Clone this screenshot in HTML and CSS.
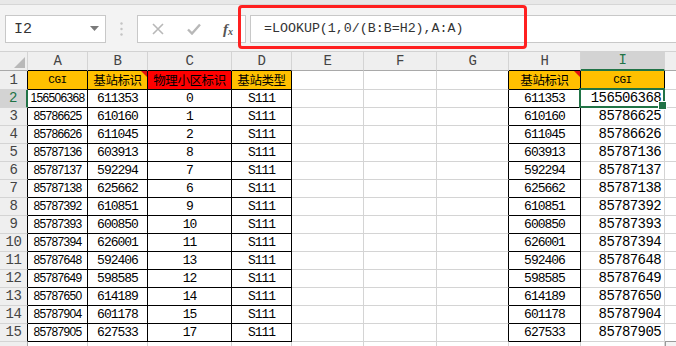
FILE: index.html
```html
<!DOCTYPE html>
<html lang="zh-CN">

<head>
    <meta charset="UTF-8">
    <meta name="viewport" content="width=device-width, initial-scale=1.0">
    <title>LOOKUP 反向查找</title>
    <link rel="stylesheet" href="styles.css">
</head>

<body>
    <div class="top-strip"></div>

    <div class="formula-bar">
        <div class="name-box">
            <span>I2</span>
            <svg class="drop" width="9" height="5" viewBox="0 0 9 5"><path d="M0 0H9L4.5 5Z" fill="#7a7a7a"/></svg>
        </div>
        <div class="grip">
            <svg width="3" height="14" viewBox="0 0 3 14"><circle cx="1.5" cy="1.5" r="1.2" fill="#c4c4c4"/><circle cx="1.5" cy="7" r="1.2" fill="#c4c4c4"/><circle cx="1.5" cy="12.5" r="1.2" fill="#c4c4c4"/></svg>
        </div>
        <div class="fx-box">
            <svg class="btn" width="12" height="12" viewBox="0 0 12 12"><path d="M1 1L11 11M11 1L1 11" stroke="#b8b8b8" stroke-width="1.6" fill="none"/></svg>
            <svg class="btn" width="14" height="12" viewBox="0 0 14 12"><path d="M1 6.5L5 10.5L13 1.5" stroke="#b8b8b8" stroke-width="2.4" fill="none"/></svg>
            <span class="fx">f<sub>x</sub></span>
        </div>
        <div class="formula">=LOOKUP(1,0/(B:B=H2),A:A)</div>
    </div>
    <div class="highlight"></div>

    <table class="sheet">
        <colgroup>
            <col style="width:28px">
            <col style="width:60px">
            <col style="width:60px">
            <col style="width:84px">
            <col style="width:60px">
            <col style="width:72px">
            <col style="width:73px">
            <col style="width:72px">
            <col style="width:72px">
            <col style="width:84px">
            <col style="width:40px">
        </colgroup>
        <thead>
            <tr>
                <th class="ch corner"><svg width="11" height="11" viewBox="0 0 11 11"><path d="M11 0V11H0Z" fill="#b9b9b9"/></svg></th>
                <th class="ch bk">A</th>
                <th class="ch bk">B</th>
                <th class="ch bk">C</th>
                <th class="ch bk">D</th>
                <th class="ch">E</th>
                <th class="ch">F</th>
                <th class="ch">G</th>
                <th class="ch bk">H</th>
                <th class="ch act">I</th>
                <th class="ch"></th>
            </tr>
        </thead>
        <tbody>
            <tr class="d first">
                <th class="rh">1</th>
                <td class="yel cgi">CGI</td>
                <td class="yel cn note">基站标识</td>
                <td class="red cn">物理小区标识</td>
                <td class="yel cn">基站类型</td>
                <td></td><td></td><td></td>
                <td class="yel cn note">基站标识</td>
                <td class="yel cgi">CGI</td>
                <td></td>
            </tr>
            <tr class="d">
                <th class="rh act">2</th>
                <td class="a">156506368</td><td>611353</td><td>0</td><td>S111</td>
                <td></td><td></td><td></td>
                <td>611353</td><td class="v sel">156506368</td><td></td>
            </tr>
            <tr class="d">
                <th class="rh">3</th>
                <td class="a">85786625</td><td>610160</td><td>1</td><td>S111</td>
                <td></td><td></td><td></td>
                <td>610160</td><td class="v">85786625</td><td></td>
            </tr>
            <tr class="d">
                <th class="rh">4</th>
                <td class="a">85786626</td><td>611045</td><td>2</td><td>S111</td>
                <td></td><td></td><td></td>
                <td>611045</td><td class="v">85786626</td><td></td>
            </tr>
            <tr class="d">
                <th class="rh">5</th>
                <td class="a">85787136</td><td>603913</td><td>8</td><td>S111</td>
                <td></td><td></td><td></td>
                <td>603913</td><td class="v">85787136</td><td></td>
            </tr>
            <tr class="d">
                <th class="rh">6</th>
                <td class="a">85787137</td><td>592294</td><td>7</td><td>S111</td>
                <td></td><td></td><td></td>
                <td>592294</td><td class="v">85787137</td><td></td>
            </tr>
            <tr class="d">
                <th class="rh">7</th>
                <td class="a">85787138</td><td>625662</td><td>6</td><td>S111</td>
                <td></td><td></td><td></td>
                <td>625662</td><td class="v">85787138</td><td></td>
            </tr>
            <tr class="d">
                <th class="rh">8</th>
                <td class="a">85787392</td><td>610851</td><td>9</td><td>S111</td>
                <td></td><td></td><td></td>
                <td>610851</td><td class="v">85787392</td><td></td>
            </tr>
            <tr class="d">
                <th class="rh">9</th>
                <td class="a">85787393</td><td>600850</td><td>10</td><td>S111</td>
                <td></td><td></td><td></td>
                <td>600850</td><td class="v">85787393</td><td></td>
            </tr>
            <tr class="d">
                <th class="rh">10</th>
                <td class="a">85787394</td><td>626001</td><td>11</td><td>S111</td>
                <td></td><td></td><td></td>
                <td>626001</td><td class="v">85787394</td><td></td>
            </tr>
            <tr class="d">
                <th class="rh">11</th>
                <td class="a">85787648</td><td>592406</td><td>13</td><td>S111</td>
                <td></td><td></td><td></td>
                <td>592406</td><td class="v">85787648</td><td></td>
            </tr>
            <tr class="d">
                <th class="rh">12</th>
                <td class="a">85787649</td><td>598585</td><td>12</td><td>S111</td>
                <td></td><td></td><td></td>
                <td>598585</td><td class="v">85787649</td><td></td>
            </tr>
            <tr class="d">
                <th class="rh">13</th>
                <td class="a">85787650</td><td>614189</td><td>14</td><td>S111</td>
                <td></td><td></td><td></td>
                <td>614189</td><td class="v">85787650</td><td></td>
            </tr>
            <tr class="d">
                <th class="rh">14</th>
                <td class="a">85787904</td><td>601178</td><td>15</td><td>S111</td>
                <td></td><td></td><td></td>
                <td>601178</td><td class="v">85787904</td><td></td>
            </tr>
            <tr class="d">
                <th class="rh">15</th>
                <td class="a">85787905</td><td>627533</td><td>17</td><td>S111</td>
                <td></td><td></td><td></td>
                <td>627533</td><td class="v">85787905</td><td></td>
            </tr>
            <tr>
                <th class="rh"></th>
                <td></td><td></td><td></td><td></td>
                <td></td><td></td><td></td>
                <td></td><td></td><td></td>
            </tr>
        </tbody>
    </table>
    <div class="paste"></div>
</body>

</html>
```

FILE: styles.css
```css
:root {
    --grid: #d4d4d4;
    --head-bg: #efefef;
    --green: #217346;
    --yellow: #ffc000;
}

* {
    box-sizing: border-box;
}

body {
    margin: 0;
    width: 676px;
    height: 346px;
    overflow: hidden;
    position: relative;
    background-color: #ffffff;
    color: #000000;
    font-family: "Liberation Mono", "Noto Sans CJK SC", monospace;
}

/* formula bar */

.top-strip {
    height: 5px;
    background-color: #e8e8e8;
    border-bottom: 1px solid #d6d6d6;
}

.formula-bar {
    display: flex;
    align-items: flex-start;
    height: 47px;
    padding: 10px 0 0 5px;
    background-color: #f3f3f3;
    border-bottom: 1px solid #d2d2d2;
}

.name-box {
    display: flex;
    align-items: center;
    width: 101px;
    height: 28px;
    padding: 0 6px 0 8px;
    background-color: #ffffff;
    border: 1px solid #c8c8c8;
    font-size: 15px;
    color: #333;
}

.name-box .drop {
    margin-left: auto;
    margin-top: -2px;
}

.grip {
    display: flex;
    justify-content: center;
    align-items: center;
    width: 31px;
    height: 28px;
}

.fx-box {
    display: flex;
    align-items: center;
    width: 109px;
    height: 28px;
    padding-left: 14px;
    background-color: #ffffff;
    border: 1px solid #c8c8c8;
}

.fx-box .btn {
    margin-right: 23px;
}

.fx-box .btn + .btn {
    margin-right: 22px;
}

.fx {
    font-family: "Liberation Serif", serif;
    font-style: italic;
    font-weight: bold;
    font-size: 15px;
    color: #555;
}

.fx sub {
    font-size: 10px;
    vertical-align: -1px;
}

.formula {
    flex: 1;
    height: 28px;
    margin-left: 4px;
    margin-right: -2px;
    padding-left: 13px;
    background-color: #ffffff;
    border: 1px solid #c8c8c8;
    font-size: 13.3px;
    line-height: 25px;
    color: #333;
}

.highlight {
    position: absolute;
    left: 238px;
    top: 5px;
    width: 289px;
    height: 44px;
    border: 3px solid #ff2020;
    border-radius: 4px;
}

/* sheet */

.sheet {
    border-collapse: separate;
    border-spacing: 0;
    table-layout: fixed;
    width: 705px;
}

.sheet th,
.sheet td {
    height: 18px;
    padding: 0;
    line-height: 17px;
    white-space: nowrap;
    overflow: hidden;
    text-align: center;
    border-right: 1px solid var(--grid);
    border-bottom: 1px solid var(--grid);
}

.sheet .first th,
.sheet .first td {
    height: 19px;
    line-height: 18px;
}

.ch {
    background-color: var(--head-bg);
    border-bottom-color: #a9a9a9 !important;
    font-weight: normal;
    font-size: 14px;
    letter-spacing: -0.5px;
    color: #444;
}

.ch.bk {
    border-bottom-color: #000 !important;
}

.ch.act {
    background-color: #d3d3d3;
    color: var(--green);
    border-bottom: 2px solid var(--green) !important;
}

.corner {
    text-align: right !important;
    vertical-align: bottom;
    padding: 0 2px 2px 0 !important;
}

.corner svg {
    display: block;
    margin-left: auto;
}

.rh {
    background-color: var(--head-bg);
    border-right-color: #a9a9a9 !important;
    font-weight: normal;
    font-size: 14px;
    letter-spacing: -0.5px;
    color: #444;
}

.d .rh {
    border-right-color: #000 !important;
}

.d .rh.act {
    background-color: #d3d3d3;
    color: var(--green);
    border-right: 2px solid var(--green) !important;
}

.sheet td {
    font-size: 13px;
    letter-spacing: -1px;
}

/* bordered blocks A1:D15, H1:H15, I1 */
.d td:nth-child(-n+5),
.d td:nth-child(9),
.first td:nth-child(10) {
    border-right-color: #000;
    border-bottom-color: #000;
}

.d td:nth-child(8) {
    border-right-color: #000;
}

.sheet td.a {
    font-family: "Liberation Sans", sans-serif;
    font-size: 12px;
    letter-spacing: -0.7px;
}

.sheet td.v {
    text-align: right;
    padding-right: 3px;
    font-size: 14px;
    letter-spacing: -0.6px;
}

.sheet td.cn {
    font-family: "Noto Sans CJK SC", sans-serif;
    font-size: 12.5px;
    letter-spacing: -0.4px;
}

.sheet td.cgi {
    font-size: 11px;
    letter-spacing: -0.4px;
}

.yel {
    background-color: var(--yellow);
}

.red {
    background-color: #ff0000;
}

.note {
    position: relative;
}

.note::after {
    content: '';
    position: absolute;
    top: 0;
    right: 0;
    border-top: 6px solid #e01010;
    border-left: 6px solid transparent;
}

.sel {
    position: relative;
    overflow: visible !important;
}

.sel::before {
    content: '';
    position: absolute;
    left: -2px;
    top: -2px;
    right: -1px;
    bottom: -1px;
    border: 2px solid var(--green);
}

.sel::after {
    content: '';
    position: absolute;
    right: -3px;
    bottom: -3px;
    width: 7px;
    height: 7px;
    background-color: var(--green);
    border: 1px solid #ffffff;
}

.paste {
    position: absolute;
    left: 665px;
    top: 341px;
    width: 12px;
    height: 8px;
    background-color: #f4f4f4;
    border: 1px solid #9a9a9a;
}
```
